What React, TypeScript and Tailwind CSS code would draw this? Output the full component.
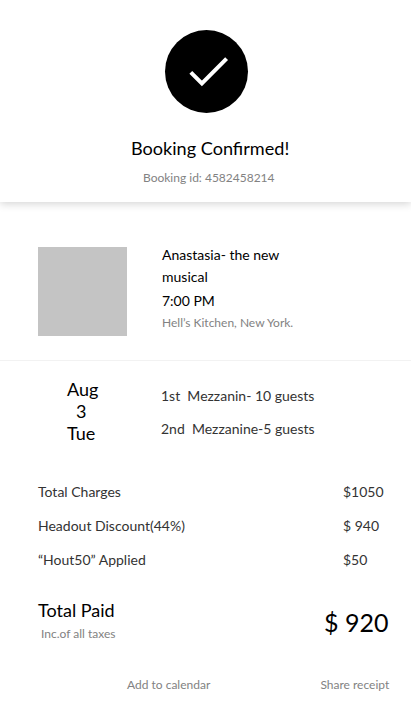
const charges = [
  ["Total Charges", "$1050"],
  ["Headout Discount(44%)", "$ 940"],
  ["“Hout50” Applied", "$50"],
];

export default function App() {
  return (
    <main className="flex h-[717px] w-[411px] flex-col overflow-hidden bg-white font-['Lato',sans-serif] text-black antialiased">
      <header className="flex h-[202px] shrink-0 flex-col pt-[30px] shadow-[0_2px_8px_rgba(0,0,0,0.17)]">
        <div className="ml-[165px] flex size-[83px] items-center justify-center rounded-full bg-black">
          <svg className="size-[83px]" viewBox="0 0 83 83" fill="none">
            <path d="M25.8 42.3L36.9 53.4L61.6 28.7" stroke="white" strokeWidth="4" />
          </svg>
        </div>
        <h1 className="mt-[24px] ml-[131px] text-[18.1px] leading-[22px]">Booking Confirmed!</h1>
        <p className="mt-[11px] ml-[143px] text-[12px] leading-[16px] text-[#828282]">Booking id: 4582458214</p>
      </header>
      <section className="flex h-[159px] shrink-0 border-b border-[#f2f2f2] pt-[45px] pl-[38px]">
        <div className="size-[89px] bg-[#c4c4c4]" />
        <div className="ml-[35px] flex flex-col text-[14px] leading-[22px]">
          <h2 className="-mt-[3px] w-[140px]">Anastasia- the new musical</h2>
          <p className="mt-[2px]">7:00 PM</p>
          <p className="mt-px text-[12px] leading-[20px] text-[#828282]">Hell’s Kitchen, New York.</p>
        </div>
      </section>
      <section className="flex h-[114px] shrink-0 pt-[17px]">
        <div className="ml-[67px] flex w-[94px] flex-col text-[18px] leading-[22px]">
          <span>Aug</span><span className="pl-[9px]">3</span><span>Tue</span>
        </div>
        <div className="flex flex-col gap-[11px] pt-[7px] text-[14px] leading-[22px] whitespace-pre text-[#333333]">
          <span>1st  Mezzanin- 10 guests</span><span>2nd  Mezzanine-5 guests</span>
        </div>
      </section>
      <section className="flex shrink-0 flex-col text-[14px] leading-[34px] text-[#333333]">
        {charges.map(([label, amount]) => (
          <div key={label} className="flex h-[34px]">
            <span className="ml-[38px] w-[305px]">{label}</span><span>{amount}</span>
          </div>
        ))}
      </section>
      <section className="mt-[21px] flex h-[67px] shrink-0">
        <div className="ml-[38px] w-[286px]">
          <h2 className="text-[18px] leading-[24px]">Total Paid</h2>
          <p className="mt-px ml-[3px] text-[12px] leading-[22px] text-[#828282]">Inc.of all taxes</p>
        </div>
        <span className="pt-[9px] text-[25px] leading-[30px]">$ 920</span>
      </section>
      <footer className="flex pt-[12px] text-[12px] leading-[16px] text-[#828282]">
        <button className="ml-[127px] w-[193.4px] text-left">Add to calendar</button>
        <button>Share receipt</button>
      </footer>
    </main>
  );
}
